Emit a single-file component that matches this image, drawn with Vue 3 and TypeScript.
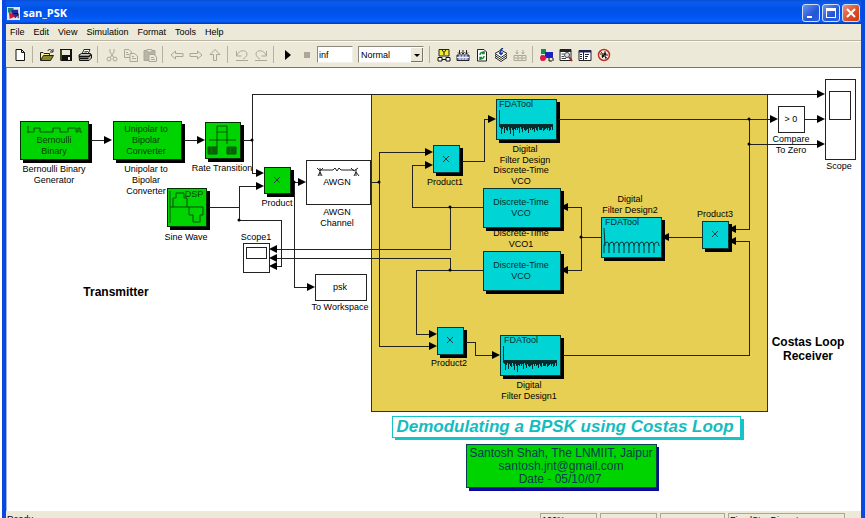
<script setup lang="ts">
import { ref } from 'vue'

type Kind = 'green' | 'cyan' | 'plain'
interface Block { x: number; y: number; w: number; h: number; kind: Kind }
interface Label { x: number; y: number; lines: string[]; tone?: string }
interface Arrow { x: number; y: number; left?: boolean }

const menus = ['File', 'Edit', 'View', 'Simulation', 'Format', 'Tools', 'Help']
const stopTime = ref('inf')
const mode = ref('Normal')

const blocks: Block[] = [
  { x: 20, y: 121, w: 68, h: 38, kind: 'green' },
  { x: 113, y: 121, w: 68, h: 38, kind: 'green' },
  { x: 205, y: 122, w: 35, h: 36, kind: 'green' },
  { x: 167, y: 188, w: 39, h: 38, kind: 'green' },
  { x: 264, y: 167, w: 26, h: 26, kind: 'green' },
  { x: 306, y: 160, w: 64, h: 44, kind: 'plain' },
  { x: 243, y: 243, w: 26, h: 29, kind: 'plain' },
  { x: 246, y: 247, w: 20, h: 11, kind: 'plain' },
  { x: 315, y: 274, w: 51, h: 26, kind: 'plain' },
  { x: 778, y: 106, w: 26, h: 26, kind: 'plain' },
  { x: 825, y: 79, w: 30, h: 80, kind: 'plain' },
  { x: 829, y: 91, w: 21, h: 28, kind: 'plain' },
  { x: 433, y: 145, w: 26, h: 27, kind: 'cyan' },
  { x: 496, y: 99, w: 60, h: 40, kind: 'cyan' },
  { x: 483, y: 188, w: 77, h: 39, kind: 'cyan' },
  { x: 483, y: 251, w: 77, h: 39, kind: 'cyan' },
  { x: 437, y: 327, w: 26, h: 27, kind: 'cyan' },
  { x: 500, y: 335, w: 60, h: 40, kind: 'cyan' },
  { x: 601, y: 217, w: 60, h: 40, kind: 'cyan' },
  { x: 702, y: 221, w: 26, h: 27, kind: 'cyan' },
]

const wires = [
  'M91 140H106', 'M184 140H198', 'M243 140H252', 'M252 173V94H820', 'M252 173H258',
  'M209 207H239V186H258', 'M239 207V220H281V266H275', 'M293 182H300', 'M294 182V287H308',
  'M370 182H379', 'M428 152H379V346H431', 'M483 207H412V165H427', 'M450 207V249H275',
  'M483 270H416V334H431', 'M450 270V258H275', 'M462 161H484V119H490', 'M466 342H475V355H494',
  'M559 119H772', 'M749 119V229H734', 'M749 144H819', 'M563 355H749V241H734', 'M804 119H819',
  'M702 237H667', 'M601 237H581', 'M566 207H581V270H566',
]

const arrows: Arrow[] = [
  { x: 112, y: 140 }, { x: 205, y: 140 }, { x: 264, y: 173 }, { x: 264, y: 186 },
  { x: 306, y: 182 }, { x: 315, y: 287 }, { x: 433, y: 152 }, { x: 433, y: 165 },
  { x: 496, y: 119 }, { x: 437, y: 334 }, { x: 437, y: 346 }, { x: 500, y: 355 },
  { x: 778, y: 119 }, { x: 825, y: 94 }, { x: 825, y: 119 }, { x: 825, y: 144 },
  { x: 269, y: 249, left: true }, { x: 269, y: 258, left: true }, { x: 269, y: 266, left: true },
  { x: 560, y: 207, left: true }, { x: 560, y: 270, left: true }, { x: 661, y: 237, left: true },
  { x: 728, y: 229, left: true }, { x: 728, y: 241, left: true },
]

const dots = [[252, 140], [239, 220], [294, 182], [379, 182], [450, 207], [450, 270], [581, 237], [749, 119], [749, 144]]
const crosses = [[277, 180], [446, 159], [450, 340], [715, 234]]

const labels: Label[] = [
  { x: 54, y: 143, lines: ['Bernoulli', 'Binary'], tone: 'on-green' },
  { x: 54, y: 172, lines: ['Bernoulli Binary', 'Generator'] },
  { x: 146, y: 132, lines: ['Unipolar to', 'Bipolar', 'Converter'], tone: 'on-green' },
  { x: 146, y: 172, lines: ['Unipolar to', 'Bipolar', 'Converter'] },
  { x: 222, y: 171, lines: ['Rate Transition'] },
  { x: 186, y: 240, lines: ['Sine Wave'] },
  { x: 194, y: 197, lines: ['DSP'], tone: 'on-green' },
  { x: 277, y: 206, lines: ['Product'] },
  { x: 337, y: 185, lines: ['AWGN'] },
  { x: 337, y: 215, lines: ['AWGN', 'Channel'] },
  { x: 256, y: 240, lines: ['Scope1'] },
  { x: 340, y: 290, lines: ['psk'] },
  { x: 340, y: 310, lines: ['To Workspace'] },
  { x: 445, y: 185, lines: ['Product1'] },
  { x: 525, y: 152, lines: ['Digital', 'Filter Design'] },
  { x: 521, y: 173, lines: ['Discrete-Time', 'VCO'] },
  { x: 521, y: 205, lines: ['Discrete-Time', 'VCO'], tone: 'on-cyan' },
  { x: 521, y: 236, lines: ['Discrete-Time', 'VCO1'] },
  { x: 521, y: 268, lines: ['Discrete-Time', 'VCO'], tone: 'on-cyan' },
  { x: 449, y: 366, lines: ['Product2'] },
  { x: 529, y: 388, lines: ['Digital', 'Filter Design1'] },
  { x: 630, y: 202, lines: ['Digital', 'Filter Design2'] },
  { x: 715, y: 217, lines: ['Product3'] },
  { x: 791, y: 142, lines: ['Compare', 'To Zero'] },
  { x: 791, y: 122, lines: ['> 0'] },
  { x: 839, y: 169, lines: ['Scope'] },
  { x: 516, y: 107, lines: ['FDATool'], tone: 'on-cyan' },
  { x: 521, y: 343, lines: ['FDATool'], tone: 'on-cyan' },
  { x: 622, y: 225, lines: ['FDATool'], tone: 'on-cyan' },
]

// Stop-band ripple of a filter response: a dense band with irregular spikes below it
const depths = [4, 9, 5, 3, 8, 4, 11, 6, 3, 7, 9, 4, 10, 11, 5, 7, 3, 6, 4, 8, 3, 5, 7, 4, 9, 6, 12, 5, 8, 4, 6, 3, 9, 5, 7, 4, 10, 6, 3, 7, 5, 9, 4, 6, 11, 5, 3, 8, 4, 6, 9, 3, 5]
const ripple = (x: number, y: number) => depths.map((d, i) => `M${x + i} ${y}v${(i % 3 === 1 ? d + 1 : Math.min(d, 6))}`).join('')
const lobes = (x: number, y: number) =>
  Array.from({ length: 11 }, (_, i) => `M${x + i * 5} ${y + 11}V${y + 3}Q${x + i * 5 + 1} ${y} ${x + i * 5 + 3} ${y}T${x + i * 5 + 5} ${y + 4}`).join('')
const status = ['100%', '', '', 'FixedStepDiscrete']
</script>

<template>
  <div class="window">
    <header class="titlebar">
      <svg class="app-icon" viewBox="0 0 14 14" aria-hidden="true">
        <path d="M0 0H14V14H0Z" fill="#e8e4ee" /><path d="M1 1H7V6H1Z" fill="#188070" /><path d="M5 3H12V9L9 12L5 8Z" fill="#28289a" />
        <path d="M2 5L9 10L3 13Z" fill="#d81830" /><path d="M7 7H12V12" fill="none" stroke="#111" />
      </svg>
      <h1>san_PSK</h1>
      <div class="controls">
        <button aria-label="Minimize"><svg viewBox="0 0 16 16"><path d="M4 11H9V13H4Z" fill="#fff" /></svg></button>
        <button aria-label="Maximize"><svg viewBox="0 0 16 16"><path d="M3 3H13V13H3ZM4 6V12H12V6Z" fill="#fff" fill-rule="evenodd" /></svg></button>
        <button class="close" aria-label="Close"><svg viewBox="0 0 16 16"><path d="M4 4L12 12M12 4L4 12" stroke="#fff" stroke-width="2" /></svg></button>
      </div>
    </header>

    <nav class="menubar"><button v-for="m in menus" :key="m">{{ m }}</button></nav>

    <div class="toolbar" role="toolbar" aria-label="Model tools">
      <button aria-label="New"><svg viewBox="0 0 14 14"><path d="M3 1.500H8.500L11.500 4.500V12.500H3ZM8.500 1.500V4.500H11.500" fill="#fff" stroke="#111" /></svg></button>
      <i class="sep" />
      <button aria-label="Open"><svg viewBox="0 0 14 14"><path d="M.5 12V4.500H3L4 5.500H9.500V7" fill="#f4f090" stroke="#222" /><path d="M.5 12.500L3.500 7.500H13.500L10.500 12.500Z" fill="#8c8820" stroke="#222" /><path d="M7.500 3C9 1 11 1 12.500 3.500M10 4H13V1" fill="none" stroke="#222" /></svg></button>
      <button aria-label="Save"><svg viewBox="0 0 14 14"><path d="M1 1H13V13H2L1 12Z" fill="#111" /><path d="M3 2H11V7H3Z" fill="#ecead8" /><path d="M9 9H11V12H9Z" fill="#eee" /><path d="M2 2V12" stroke="#77782a" /></svg></button>
      <button aria-label="Print"><svg viewBox="0 0 14 14"><path d="M4 6L6 1.500H12L10 6" fill="#fff" stroke="#222" /><path d="M6.500 3.500H10M6 5H9" stroke="#555" /><path d="M1 7L3.500 5.500H12.500L13.500 7V10L11 12.500H1.500Z" fill="#c8c6b8" stroke="#111" /><path d="M1 8.500H11L13 6.500M2 10.500H10.500" fill="none" stroke="#111" stroke-width="1.500" /></svg></button>
      <i class="sep" />
      <button aria-label="Cut"><svg viewBox="0 0 14 14" class="off"><path d="M5 1V4L9 10M9 1V4L5 10" /><circle cx="4" cy="11" r="2" /><circle cx="10" cy="11" r="2" /></svg></button>
      <button aria-label="Copy"><svg viewBox="0 0 14 14" class="off"><path d="M.5 1.500H5L7.500 4V9.500H.5ZM2 4.500H4M2 6.500H5" /><path d="M6 5.500H10.500L13.500 8V13.500H6ZM8 8.500H10M8 10.500H12" fill="#ece9d8" /></svg></button>
      <button aria-label="Paste"><svg viewBox="0 0 14 14" class="off"><path d="M1 2.500H12V12.500H1Z" fill="#b8b5a6" /><path d="M4 1.500H9V4H4Z" fill="#ece9d8" /><path d="M6 6.500H11L13.500 9V13.500H6ZM8 9.500H11M8 11.500H12" fill="#ece9d8" /></svg></button>
      <i class="sep" />
      <button aria-label="Back"><svg viewBox="0 0 14 14" class="off"><path d="M1 7L5.500 3V5.500H13V8.500H5.500V11Z" /></svg></button>
      <button aria-label="Forward"><svg viewBox="0 0 14 14" class="off"><path d="M13 7L8.500 3V5.500H1V8.500H8.500V11Z" /></svg></button>
      <button aria-label="Up"><svg viewBox="0 0 14 14" class="off"><path d="M7 1.500L12 6.500H8.500V12.500H5.500V6.500H2Z" /></svg></button>
      <i class="sep" />
      <button aria-label="Undo"><svg viewBox="0 0 14 14" class="off"><path d="M1.500 3V8H6.500M2 7C5 1 12 2 12 6C12 8 10 10 8 11M1 12.500H13" /></svg></button>
      <button aria-label="Redo"><svg viewBox="0 0 14 14" class="off"><path d="M12.500 3V8H7.500M12 7C9 1 2 2 2 6C2 8 4 10 6 11M1 12.500H13" /></svg></button>
      <i class="sep" />
      <button aria-label="Start simulation"><svg viewBox="0 0 14 14"><path d="M4 2L10 7L4 12Z" fill="#000" /></svg></button>
      <button aria-label="Stop simulation"><svg viewBox="0 0 14 14"><path d="M4 4H10V10H4Z" fill="#aaa798" /></svg></button>
      <input v-model="stopTime" class="stop-time" aria-label="Stop time">
      <div class="mode">
        <select v-model="mode" aria-label="Simulation mode"><option>Normal</option><option>Accelerator</option></select>
        <svg viewBox="0 0 12 14" aria-hidden="true"><path d="M0 0H12V14H0Z" fill="#ece9d8" /><path d="M0 13.500H11.500V0" fill="none" stroke="#77756a" /><path d="M3 6H9L6 9Z" fill="#000" /></svg>
      </div>
      <i class="sep" />
      <button aria-label="Model explorer"><svg viewBox="0 0 14 14"><path d="M2 1.500H12V8H2Z" fill="#f4ee30" stroke="#222" /><path d="M5 2L7 4.500L9 2M7 4.500V7" fill="none" stroke="#111" /><path d="M1 9.500H5V13H1ZM9 9.500H13V13H9Z" fill="#fff" stroke="#111" /><path d="M5 11.500H9" stroke="#111" /></svg></button>
      <button aria-label="Build all"><svg viewBox="0 0 14 14"><path d="M1 7H13V12.500H1Z" fill="#8790b8" stroke="#223" /><path d="M1 9.500H13M4 7V12M7 7V12M10 7V12" stroke="#eef" /><path d="M3.500 2V6M7 2V6M10.500 2V6M2 4.500L3.500 6L5 4.500M5.500 4.500L7 6L8.500 4.500M9 4.500L10.500 6L12 4.500" fill="none" stroke="#223" /></svg></button>
      <button aria-label="Refresh blocks"><svg viewBox="0 0 14 14"><path d="M2.500 1.500H9L11.500 4V13H2.500Z" fill="#fff" stroke="#222" /><path d="M5 7C5 4 8 4 9 5M9 3V5.500H7M9 8C9 11 6 11 5 10M5 12V9.500H7" fill="none" stroke="#168a30" stroke-width="1.500" /></svg></button>
      <button aria-label="Update diagram"><svg viewBox="0 0 14 14"><path d="M1 9.500L7 6L13 9.500L7 13.500Z" fill="#fff" stroke="#222" /><path d="M1 7.500L7 4L13 7.500L7 11.500Z" fill="#fff" stroke="#222" /><path d="M1 5.500L7 2L13 5.500L7 9.500Z" fill="#fff" stroke="#222" /><path d="M9 0C7 1 6 3 7 6M5 4.500L7 6.500L9 4.500" fill="none" stroke="#2038a0" stroke-width="1.500" /></svg></button>
      <button aria-label="Build subsystem"><svg viewBox="0 0 14 14" class="off"><path d="M1 7.500H13V12.500H1ZM1 10H13M5 8V12M9 8V12M4 2V6M10 2V6M2.500 4.500L4 6L5.500 4.500M8.500 4.500L10 6L11.500 4.500" /></svg></button>
      <i class="sep" />
      <button aria-label="Library browser"><svg viewBox="0 0 14 14"><path d="M1 1H6V6H1Z" fill="#109048" /><path d="M5 4H13V10H5Z" fill="#2020c0" /><path d="M1 7L7 10L1 13Z" fill="#e01848" /><circle cx="3" cy="10" r="3" fill="#e01848" /><path d="M9 10V13H12M13 10V13" fill="none" stroke="#111" /></svg></button>
      <button aria-label="Find"><svg viewBox="0 0 14 14"><path d="M1 1.500H12V12.500H1Z" fill="#fff" stroke="#222" /><path d="M1 3H12" stroke="#222" stroke-width="2" /><path d="M2.500 6H5M2.500 8.500H5M2.500 10.500H7" stroke="#444" /><circle cx="8" cy="7" r="2.500" fill="#dde" stroke="#444" /><path d="M10 9L13 13" stroke="#a02828" stroke-width="2" /></svg></button>
      <button aria-label="Model browser"><svg viewBox="0 0 14 14"><path d="M1 2.500H13V12.500H1Z" fill="#fff" stroke="#222" /><path d="M1 3.500H13" stroke="#16206c" stroke-width="2" /><path d="M5.500 4V12M2 6.500H4M2 8.500H4M2 10.500H4M7 6.500H11M7 8.500H10M7 10.500H9" stroke="#223" /></svg></button>
      <button aria-label="Debug"><svg viewBox="0 0 14 14"><circle cx="7" cy="7" r="5.500" fill="#f6e8e0" stroke="#c03020" stroke-width="1.500" /><ellipse cx="7" cy="7" rx="1.500" ry="3" fill="#111" transform="rotate(45 7 7)" /><path d="M3 6H6M5 10L7 8M8 3V6M11 7H8M9 11L8 8M4 4L6 6" stroke="#222" /><path d="M3 3L11 11" stroke="#c03020" /></svg></button>
    </div>

    <main class="canvas">
      <svg class="diagram" viewBox="7 68 853 443" width="853" height="443" role="img" aria-label="BPSK Costas loop model">
        <g class="crisp">
          <path class="region" d="M371 94H767V411H371Z" />
          <g v-for="b in blocks" :key="`${b.x}-${b.y}`">
            <rect v-if="b.kind !== 'plain'" :x="b.x + 3" :y="b.y + 3" :width="b.w" :height="b.h" class="shadow" />
            <rect :x="b.x" :y="b.y" :width="b.w" :height="b.h" :class="b.kind" />
          </g>
          <path v-for="w in wires" :key="w" class="wire" :d="w" />
        </g>
        <path v-for="a in arrows" :key="`${a.x}-${a.y}`" :d="a.left ? `M${a.x} ${a.y}l8 -4v8z` : `M${a.x} ${a.y}l-8 -4v8z`" />
        <circle v-for="d in dots" :key="`${d[0]}-${d[1]}`" :cx="d[0]" :cy="d[1]" r="1.5" />
        <path v-for="c in crosses" :key="`${c[0]}x${c[1]}`" class="cross" :d="`M${c[0] - 3} ${c[1] - 3}l6 6m0 -6l-6 6`" />

        <!-- Bernoulli pulse train -->
        <path class="glyph-green" d="M28 126V133M27 132H34V128H40V132H53V128H60V132H68V128H76V132H78V128H80V132H82" />
        <!-- Rate transition -->
        <g class="glyph-green"><path d="M217 126H227V132H217ZM209 140H236M217 132V147M227 132V144" /><path d="M208 147H217V154H208ZM227 147H236V154H227Z" fill="#0a7a0a" /><path d="M210 148V153M213 148V153M215 148V153M229 148V153M232 148V153M234 148V153" /></g>
        <!-- Sampled sine -->
        <path class="glyph-green" d="M170 191V223M170 207H203M173 207V198H176V193H184V198H187V207M189 207V215H193V222H200V215H203V207" />
        <!-- Channel antennas -->
        <path class="glyph-black" d="M317 168L320 171L323 168M320 168V176M318 176L320 172L322 176M320 170H333L335 168L337 171L339 168L341 170H354M351 168L354 171L358 168M356 169V176M354 176L356 172L359 176" />
        <!-- Filter responses -->
        <g class="crisp">
          <path class="glyph-dark" d="M499 110V127M500 125H553M500 126H553" /><path class="glyph-dark" :d="ripple(500, 124)" />
          <path class="glyph-dark" d="M503 346V363M504 361H557M504 362H557" /><path class="glyph-dark" :d="ripple(504, 360)" />
        </g>
        <path class="glyph-dark" d="M604 228L605 246" /><path class="glyph-dark" :d="lobes(604, 242)" />

        <text v-for="(l, i) in labels" :key="i" :class="l.tone"><tspan v-for="(t, n) in l.lines" :key="n" :x="l.x" :y="l.y + n * 11">{{ t }}</tspan></text>

        <text class="section" x="116" y="296">Transmitter</text>
        <text class="section"><tspan x="808" y="346">Costas Loop</tspan><tspan x="808" y="360">Receiver</tspan></text>

        <g class="crisp">
          <rect x="395" y="419" width="349" height="21" fill="#14c4c8" /><rect x="392" y="416" width="348" height="21" fill="#fff" stroke="#14c4c8" />
          <rect x="469" y="447" width="190" height="44" fill="#0a0a9c" /><rect x="466" y="444" width="190" height="43" fill="#00d400" stroke="#083c50" />
        </g>
        <text class="heading" x="565" y="432">Demodulating a BPSK using Costas Loop</text>
        <text class="author"><tspan x="561" y="457">Santosh Shah, The LNMIIT, Jaipur</tspan><tspan x="561" y="470">santosh.jnt@gmail.com</tspan><tspan x="560" y="483">Date - 05/10/07</tspan></text>
      </svg>
    </main>

    <footer class="statusbar">
      <span class="ready">Ready</span>
      <span v-for="(s, i) in status" :key="i" class="panel" :class="`p${i}`">{{ s }}</span>
    </footer>
  </div>
</template>

<style>
html, body { margin: 0; overflow: hidden; background: #fff; }
</style>

<style scoped>
.window { box-sizing: border-box; height: 100vh; overflow: hidden; margin-left: 2px; border: solid #0a48e0; border-width: 0 4px; display: flex; flex-direction: column; background: #ece9d8; font-family: "Liberation Sans", Arial, sans-serif; font-size: 9px; color: #000; }
.window > * { flex: none; }
button { font: inherit; color: inherit; border: 0; padding: 0; margin: 0; background: none; }
.titlebar { display: flex; align-items: center; height: 24px; margin: 0 -4px; padding: 2px 5px 0 5px; box-sizing: border-box; background: linear-gradient(#0a50d8 0, #0a5cf0 3px, #0050e4 9px, #0058f4 18px, #0a60f8 21px, #0038b8 24px); }
.app-icon { width: 13px; height: 13px; }
h1 { flex: 1; margin: 0 0 0 3px; font: bold 11px "Open Sans", sans-serif; line-height: 20px; color: #fff; }
.controls { display: flex; gap: 2px; }
.controls button { box-sizing: border-box; width: 18px; height: 18px; border: 1px solid #d4e0fa; border-radius: 3px; background: linear-gradient(135deg, #6a94f0, #2454d8 60%, #2c62e4); display: grid; }
.controls .close { background: linear-gradient(135deg, #ec9078, #d84c24 60%, #c83c14); }
.controls svg { width: 16px; height: 16px; }
.menubar { display: flex; gap: 9px; height: 17px; padding-left: 4px; border-bottom: 1px solid #b8b5a6; box-sizing: border-box; }
.toolbar { display: flex; align-items: center; height: 27px; box-sizing: border-box; padding-left: 4px; border-top: 1px solid #fbfaf4; border-bottom: 1px solid #77756a; }
.toolbar button { width: 19px; height: 20px; display: grid; place-items: center; }
.toolbar button svg { width: 14px; height: 14px; }
.off { fill: none; stroke: #aaa798; }
.sep { width: 1px; height: 17px; margin: 0 4px 0 3px; background: #b4b1a2; }
.stop-time, select { box-sizing: border-box; height: 17px; margin: 0; border: 1px solid #8c8a7e; border-right-color: #f4f2e8; border-bottom-color: #f4f2e8; border-radius: 0; background: #fff; color: #000; font: 9px "Liberation Sans", Arial, sans-serif; }
.stop-time { width: 36px; margin: 0 5px 0 1px; padding: 0 1px; }
.mode { display: grid; width: 66px; margin-right: 2px; align-items: center; }
.mode > * { grid-area: 1 / 1; }
.mode svg { width: 12px; height: 14px; justify-self: end; margin-right: 1px; pointer-events: none; }
select { width: 100%; appearance: none; padding: 0 2px; }
.canvas { background: #fff; border-left: 1px solid #9cb4e4; }
.diagram { display: block; }
.crisp { shape-rendering: crispEdges; }
.region { fill: #e6cf53; stroke: #3c2c1c; }
.shadow { fill: #000; stroke: #000; }
.green { fill: #00d400; stroke: #033003; }
.cyan { fill: #00d4d4; stroke: #063838; }
.plain { fill: #fff; stroke: #222; }
.wire { fill: none; stroke: #222; }
.cross { fill: none; stroke: #174040; }
.glyph-green { fill: none; stroke: #064d06; }
.glyph-black { fill: none; stroke: #222; }
.glyph-dark { fill: none; stroke: #062c2c; }
text { font-size: 9px; text-anchor: middle; fill: #000; }
.on-green { fill: #043c04; }
.on-cyan { fill: #062c2c; }
.section { font-size: 12px; font-weight: bold; }
.heading { font-size: 17px; font-weight: bold; font-style: italic; fill: #14bcc0; }
.author { font-size: 12px; fill: #0a3c50; }
.statusbar { display: flex; gap: 3px; height: 20px; padding: 2px 16px 0 0; box-sizing: border-box; line-height: 13px; }
.ready { flex: 1; padding-left: 1px; }
.panel { box-sizing: border-box; height: 16px; border: 1px solid #aaa798; padding-left: 1px; }
.p0, .p1 { width: 57px; }
.p2 { width: 65px; }
.p3 { width: 117px; }
</style>
